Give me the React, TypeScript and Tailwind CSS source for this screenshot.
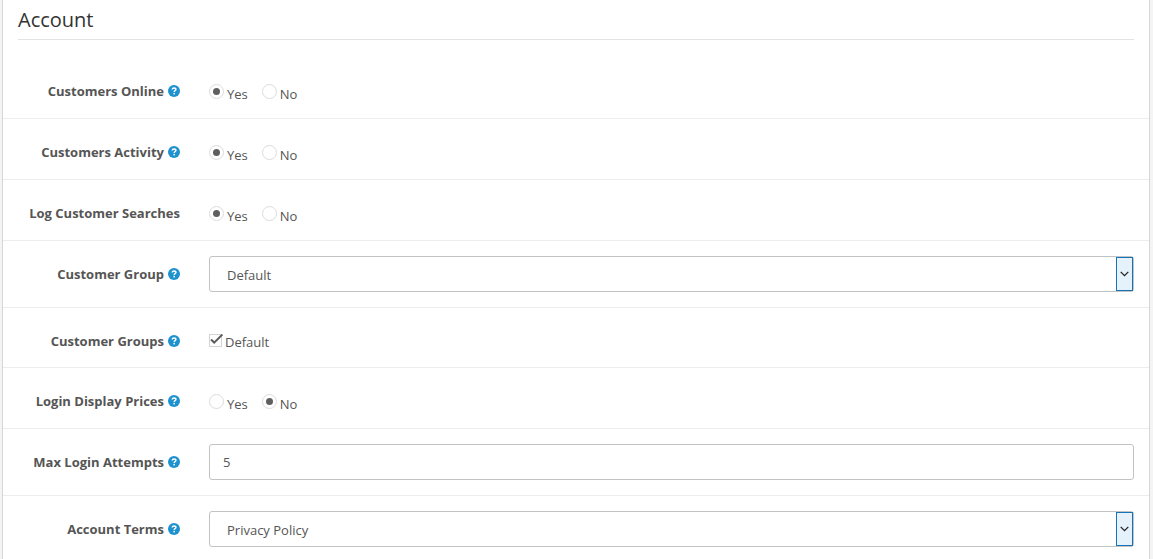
import { useState, type ReactNode } from 'react'

interface FormRowProps {
    label: string
    htmlFor?: string
    help?: boolean
    children: ReactNode
}

interface YesNoProps {
    name: string
    label: string
    initial: 'Yes' | 'No'
}

interface SelectBoxProps {
    id: string
    options: string[]
}

const HelpIcon = () => (
    <svg viewBox="0 0 12 12" className="h-3 w-3 shrink-0" aria-hidden="true">
        <circle cx="6" cy="6" r="6" fill="#1e91cf" />
        <path
            d="M4.2 4.5C4.3 3.4 5 2.9 6 2.9c1.1 0 1.9.6 1.9 1.5C7.9 5.5 6.2 5.5 6.2 7"
            fill="none"
            stroke="#fff"
            strokeWidth="1.5"
        />
        <rect x="5.4" y="7.9" width="1.5" height="1.5" fill="#fff" />
    </svg>
)

const FormRow = ({ label, htmlFor, help = true, children }: FormRowProps) => {
    const content = (
        <>
            {label}
            {help && <HelpIcon />}
        </>
    )
    const labelClass = 'flex items-center justify-end gap-1 pt-2 leading-5 font-bold whitespace-nowrap'

    return (
        <div className="flex border-t border-[#ededed] py-[15px] first:border-t-0">
            <div className="w-1/6 shrink-0 pr-3.5">
                {htmlFor ? (
                    <label htmlFor={htmlFor} className={labelClass}>{content}</label>
                ) : (
                    <div className={labelClass}>{content}</div>
                )}
            </div>
            <div className="min-w-0 flex-1 px-[15px]">{children}</div>
        </div>
    )
}

const YesNo = ({ name, label, initial }: YesNoProps) => {
    const [value, setValue] = useState<string>(initial)

    return (
        <div role="radiogroup" aria-label={label} className="flex h-[30px] gap-3.5 pt-[11px]">
            {['Yes', 'No'].map((option) => (
                <label key={option} className="flex items-start gap-[3px]">
                    <input
                        type="radio"
                        name={name}
                        value={option}
                        checked={value === option}
                        onChange={() => setValue(option)}
                        className="flex h-[15px] w-[15px] appearance-none items-center justify-center rounded-full border border-[#dcdcdc] bg-white checked:before:h-[7px] checked:before:w-[7px] checked:before:rounded-full checked:before:bg-[#5f5f5f]"
                    />
                    <span className="leading-5">{option}</span>
                </label>
            ))}
        </div>
    )
}

const SelectBox = ({ id, options }: SelectBoxProps) => (
    <div className="relative">
        <select
            id={id}
            className="block h-9 w-full appearance-none rounded-[3px] border border-[#c3c3c3] bg-white pt-[3px] pr-6 pl-[17px]"
        >
            {options.map((option) => (
                <option key={option}>{option}</option>
            ))}
        </select>
        <span className="pointer-events-none absolute inset-y-px right-px flex w-[17px] items-center justify-center border border-[#1673b8] bg-[#e5f1fb]">
            <svg viewBox="0 0 9 6" className="h-1.5 w-[9px]" aria-hidden="true">
                <path d="M.7.9 4.5 4.6 8.3.9" fill="none" stroke="#222" strokeWidth="1.3" />
            </svg>
        </span>
    </div>
)

const GroupCheckbox = () => {
    const [checked, setChecked] = useState(true)

    return (
        <div className="h-[29px] pt-[9px]">
            <label className="inline-flex items-start gap-[3px]">
                <span className="relative mt-0.5 h-[13px] w-[13px]">
                    <input
                        type="checkbox"
                        checked={checked}
                        onChange={() => setChecked(!checked)}
                        className="block h-[13px] w-[13px] appearance-none border border-[#d4d4d4] bg-white"
                    />
                    {checked && (
                        <svg viewBox="0 0 14 13" className="pointer-events-none absolute top-0 left-0 h-[13px] w-3.5" aria-hidden="true">
                            <path d="M2 5.6 5.2 8.6 13.4.5" fill="none" stroke="#5a5a5a" strokeWidth="2" />
                        </svg>
                    )}
                </span>
                <span className="leading-5">Default</span>
            </label>
        </div>
    )
}

export default function App() {
    return (
        <div className="min-h-screen bg-[#f4f4f4] pr-[3px] pl-0.5 font-['Open_Sans',sans-serif] text-[13px] text-[#555]">
            <form className="min-h-screen border-x border-[#d6d6d6] bg-white">
                <fieldset>
                    <div className="px-[15px]">
                        <h2 className="border-b border-[#e3e3e3] pt-[5px] pb-[5px] text-xl leading-[29px] text-[#333]">Account</h2>
                    </div>
                    <div className="pt-[18px]">
                        <FormRow label="Customers Online">
                            <YesNo name="customer_online" label="Customers Online" initial="Yes" />
                        </FormRow>
                        <FormRow label="Customers Activity">
                            <YesNo name="customer_activity" label="Customers Activity" initial="Yes" />
                        </FormRow>
                        <FormRow label="Log Customer Searches" help={false}>
                            <YesNo name="customer_search" label="Log Customer Searches" initial="Yes" />
                        </FormRow>
                        <FormRow label="Customer Group" htmlFor="customer-group">
                            <SelectBox id="customer-group" options={['Default']} />
                        </FormRow>
                        <FormRow label="Customer Groups">
                            <GroupCheckbox />
                        </FormRow>
                        <FormRow label="Login Display Prices">
                            <YesNo name="customer_price" label="Login Display Prices" initial="No" />
                        </FormRow>
                        <FormRow label="Max Login Attempts" htmlFor="login-attempts">
                            <input
                                id="login-attempts"
                                type="text"
                                defaultValue="5"
                                className="block h-9 w-full rounded-[3px] border border-[#c3c3c3] bg-white px-[13px]"
                            />
                        </FormRow>
                        <FormRow label="Account Terms" htmlFor="account-terms">
                            <SelectBox id="account-terms" options={['Privacy Policy', 'About Us']} />
                        </FormRow>
                    </div>
                </fieldset>
            </form>
        </div>
    )
}
